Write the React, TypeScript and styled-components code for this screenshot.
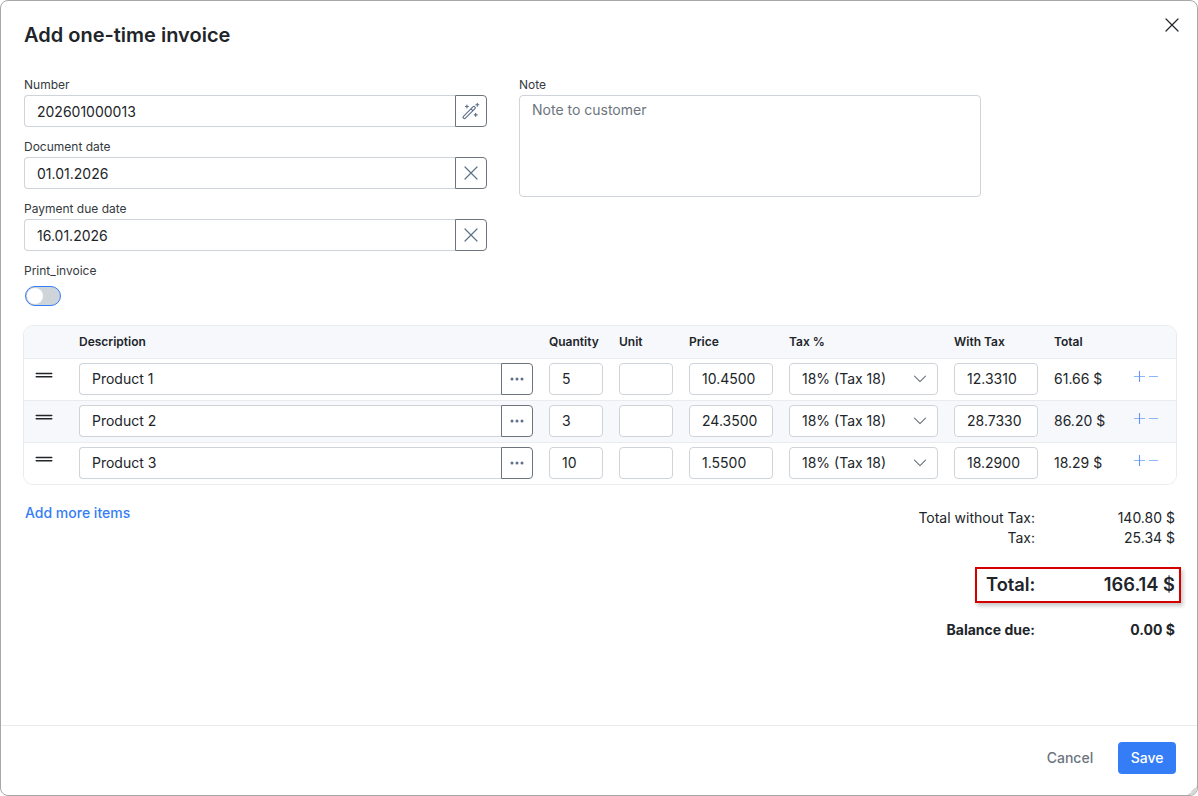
import React from "react";
import styled, { createGlobalStyle, css } from "styled-components";

const GlobalStyle = createGlobalStyle`
  *, *::before, *::after { box-sizing: border-box; }
  html, body, #root { height: 100%; margin: 0; }
  body {
    background: #fff;
    color: #212529;
    font-family: Inter, "Liberation Sans", sans-serif;
    font-size: 14px;
    line-height: 20px;
  }
  input, textarea, button, select { font: inherit; color: inherit; letter-spacing: inherit; margin: 0; }
`;

const Dialog = styled.section`
  position: relative;
  display: flex;
  flex-direction: column;
  height: 796px;
  width: 1198px;
  border: 1px solid #a8a8a8;
  border-radius: 8px;
  background: #fff;
  overflow: hidden;
`;

const DialogHeader = styled.header`
  display: flex;
  justify-content: space-between;
  align-items: flex-start;
  height: 76px;
  padding: 16px 17px 0 23px;
`;

const Title = styled.h1`
  margin: 4px 0 0;
  font-size: 20px;
  line-height: 28px;
  font-weight: 600;
`;

const CloseButton = styled.button`
  display: flex;
  padding: 0;
  border: 0;
  background: none;
`;

const DialogBody = styled.main`
  flex: 1;
  padding: 0 20px 0 22px;
`;

const FormColumns = styled.div`
  display: flex;
  gap: 32px;
  height: 248px;
  padding-left: 1px;
`;

const FormColumn = styled.div<{ $width: number }>`
  display: flex;
  flex-direction: column;
  width: ${(p) => p.$width}px;
`;

const Field = styled.label`
  display: flex;
  flex-direction: column;
  height: 62px;
`;

const FieldLabel = styled.span`
  height: 18px;
  font-size: 12px;
  line-height: 16px;
  color: #343a40;
`;

const control = css`
  height: 32px;
  border: 1px solid #ced4da;
  border-radius: 4px;
  background: #fff;
  outline: none;
`;

const InputGroup = styled.div`
  display: flex;
`;

const TextInput = styled.input<{ $joined?: boolean }>`
  ${control}
  flex: 1;
  width: 100%;
  min-width: 0;
  padding: 0 12px 1px;
  ${(p) => p.$joined && "border-top-right-radius: 0; border-bottom-right-radius: 0; border-right: 0;"}
`;

const FormInput = styled(TextInput)`
  padding: 1px 12px 0;
`;

const AddonButton = styled.button`
  ${control}
  display: flex;
  align-items: center;
  justify-content: center;
  width: 32px;
  padding: 0;
  border-color: #6c757d;
  border-radius: 0 4px 4px 0;
  color: #5c7089;
`;

const NoteArea = styled.textarea`
  ${control}
  height: 102px;
  padding: 4px 12px;
  resize: none;
  &::placeholder { color: #6c757d; opacity: 1; }
`;

const Switch = styled.span`
  display: flex;
  align-items: center;
  width: 36px;
  height: 20px;
  margin: 5px 0 0 1px;
  padding: 1px;
  border: 1px solid #357df6;
  border-radius: 10px;
  background: #ced4da;
  &::before {
    content: "";
    width: 16px;
    height: 16px;
    border-radius: 50%;
    background: #fff;
  }
`;

const ItemTable = styled.div`
  width: 1154px;
  border: 1px solid #e9ecef;
  border-radius: 10px;
  overflow: hidden;
`;

const TableRow = styled.div<{ $head?: boolean; $shaded?: boolean }>`
  display: grid;
  grid-template-columns: 28px 454px 54px 54px 84px 149px 84px 63px 28px;
  column-gap: 16px;
  align-items: ${(p) => (p.$head ? "center" : "start")};
  height: ${(p) => (p.$head ? 33 : 42)}px;
  padding: ${(p) => (p.$head ? 0 : 4)}px 0 0 11px;
  background: ${(p) => (p.$head || p.$shaded ? "#f6f8fc" : "#fff")};
  border-bottom: 1px solid #e9ecef;
  ${(p) => p.$head && "font-size: 12px; font-weight: 600;"}
  &:last-child { border-bottom: 0; height: 41px; }
`;

const RowTotal = styled.span`
  line-height: 32px;
`;

const SelectBox = styled.div`
  ${control}
  display: flex;
  align-items: center;
  justify-content: space-between;
  padding: 0 10px 0 12px;
`;

const Grip = styled.svg`
  display: block;
  margin-top: 9px;
`;

const RowActions = styled.span`
  display: flex;
  gap: 3px;
  padding: 8px 0 0 1px;
`;

const BelowTable = styled.div`
  display: flex;
  justify-content: space-between;
  align-items: flex-start;
`;

const AddLink = styled.a`
  margin: 18px 0 0 2px;
  color: #357df6;
  font-weight: 500;
`;

const Totals = styled.div`
  display: flex;
  flex-direction: column;
  align-items: flex-end;
  padding-top: 23px;
`;

const TotalLine = styled.div<{ $bold?: boolean }>`
  display: grid;
  grid-template-columns: 150px 140px;
  width: 292px;
  padding-right: 2px;
  text-align: right;
  font-weight: ${(p) => (p.$bold ? 650 : 400)};
`;

const GrandTotal = styled.div`
  display: flex;
  justify-content: space-between;
  align-items: center;
  width: 206px;
  height: 36px;
  margin: 19px -4px 17px 0;
  padding: 0 4px 3px 9px;
  border: 2px solid #d40000;
  box-shadow: 2px 3px 4px rgba(0, 0, 0, 0.22);
  font-size: 18.3px;
  font-weight: 600;
`;

const DialogFooter = styled.footer`
  display: flex;
  justify-content: flex-end;
  gap: 12px;
  height: 70px;
  padding: 16px 21px;
  border-top: 1px solid #e9ecef;
`;

const ActionButton = styled.button<{ $primary?: boolean }>`
  height: 32px;
  padding: 0 ${(p) => (p.$primary ? 12.5 : 13)}px;
  border: 0;
  border-radius: 4px;
  font-weight: 500;
  background: ${(p) => (p.$primary ? "#357df6" : "none")};
  color: ${(p) => (p.$primary ? "#fff" : "#6c757d")};
`;

const ResizeCorner = styled.span`
  position: absolute;
  right: 0;
  bottom: 0;
  width: 9px;
  height: 9px;
  background: linear-gradient(135deg, transparent 50%, #d8d8d8 50%);
`;

const Cross = ({ size }: { size: number }) => (
  <svg width={size} height={size} viewBox="0 0 16 16" fill="none" stroke="currentColor" strokeWidth="1.2" strokeLinecap="round">
    <path d="M2 2l12 12M14 2L2 14" />
  </svg>
);

const Wand = () => (
  <svg width="18" height="18" viewBox="0 0 18 18" fill="none" stroke="currentColor" strokeWidth="1.15" strokeLinecap="round" strokeLinejoin="round">
    <path d="M1.500 14.300L10.900 4.900a1.300 1.300 0 0 1 1.900 1.900L3.400 16.200a1.300 1.300 0 0 1-1.900-1.900zM9 6.800l1.900 1.900" />
    <path d="M15.300 1.200v3M13.800 2.700h3M4.900 3v3M3.400 4.500h3M13.700 11.300v3M12.200 12.800h3" />
  </svg>
);

const Dots = () => (
  <svg width="14" height="4" viewBox="0 0 14 4" fill="currentColor">
    <circle cx="2" cy="2" r="1.5" />
    <circle cx="7" cy="2" r="1.5" />
    <circle cx="12" cy="2" r="1.5" />
  </svg>
);

const Chevron = () => (
  <svg width="14" height="8" viewBox="0 0 14 8" fill="none" stroke="#6c757d" strokeWidth="1.1" strokeLinecap="round" strokeLinejoin="round">
    <path d="M1.500 1.200L7 6.700l5.500-5.500" />
  </svg>
);

const DragHandle = () => (
  <Grip width="18" height="8" viewBox="0 0 18 8" stroke="#212529" strokeWidth="1.4" strokeLinecap="round">
    <path d="M1.200 1.500h15.600M1.200 4.700h15.600" />
  </Grip>
);

const Plus = () => (
  <svg width="11" height="11" viewBox="0 0 11 11" fill="none" strokeWidth="1.1">
    <path d="M0 5.500h11" stroke="#8fb6fa" />
    <path d="M5.500 0v11" stroke="#6297f8" />
  </svg>
);

const Minus = () => (
  <svg width="11" height="11" viewBox="0 0 11 11" fill="none" strokeWidth="1.2">
    <path d="M1 5.500h9" stroke="#8fb6fa" />
  </svg>
);

const items = [
  { name: "Product 1", quantity: "5", price: "10.4500", withTax: "12.3310", total: "61.66 $" },
  { name: "Product 2", quantity: "3", price: "24.3500", withTax: "28.7330", total: "86.20 $" },
  { name: "Product 3", quantity: "10", price: "1.5500", withTax: "18.2900", total: "18.29 $" },
];

const fields = [
  { label: "Number", value: "202601000013", icon: <Wand /> },
  { label: "Document date", value: "01.01.2026", icon: <Cross size={16} /> },
  { label: "Payment due date", value: "16.01.2026", icon: <Cross size={16} /> },
];

export default function App() {
  return (
    <>
      <GlobalStyle />
      <Dialog>
        <DialogHeader>
          <Title>Add one-time invoice</Title>
          <CloseButton aria-label="Close"><Cross size={16} /></CloseButton>
        </DialogHeader>
        <DialogBody>
          <FormColumns>
            <FormColumn $width={463}>
              {fields.map((f) => (
                <Field key={f.label}>
                  <FieldLabel>{f.label}</FieldLabel>
                  <InputGroup>
                    <FormInput $joined defaultValue={f.value} />
                    <AddonButton>{f.icon}</AddonButton>
                  </InputGroup>
                </Field>
              ))}
              <Field>
                <FieldLabel>Print_invoice</FieldLabel>
                <Switch role="switch" aria-checked={false} />
              </Field>
            </FormColumn>
            <FormColumn $width={462}>
              <FieldLabel>Note</FieldLabel>
              <NoteArea placeholder="Note to customer" />
            </FormColumn>
          </FormColumns>

          <ItemTable>
            <TableRow $head>
              <span />
              <span>Description</span>
              <span>Quantity</span>
              <span>Unit</span>
              <span>Price</span>
              <span>Tax %</span>
              <span>With Tax</span>
              <span>Total</span>
            </TableRow>
            {items.map((item, i) => (
              <TableRow key={item.name} $shaded={i % 2 === 1}>
                <DragHandle />
                <InputGroup>
                  <TextInput $joined defaultValue={item.name} />
                  <AddonButton><Dots /></AddonButton>
                </InputGroup>
                <TextInput defaultValue={item.quantity} />
                <TextInput />
                <TextInput defaultValue={item.price} />
                <SelectBox>
                  <span>18% (Tax 18)</span>
                  <Chevron />
                </SelectBox>
                <TextInput defaultValue={item.withTax} />
                <RowTotal>{item.total}</RowTotal>
                <RowActions><Plus /><Minus /></RowActions>
              </TableRow>
            ))}
          </ItemTable>

          <BelowTable>
            <AddLink>Add more items</AddLink>
            <Totals>
              <TotalLine><span>Total without Tax:</span><span>140.80 $</span></TotalLine>
              <TotalLine><span>Tax:</span><span>25.34 $</span></TotalLine>
              <GrandTotal><span>Total:</span><span>166.14 $</span></GrandTotal>
              <TotalLine $bold><span>Balance due:</span><span>0.00 $</span></TotalLine>
            </Totals>
          </BelowTable>
        </DialogBody>
        <DialogFooter>
          <ActionButton>Cancel</ActionButton>
          <ActionButton $primary>Save</ActionButton>
        </DialogFooter>
        <ResizeCorner />
      </Dialog>
    </>
  );
}
